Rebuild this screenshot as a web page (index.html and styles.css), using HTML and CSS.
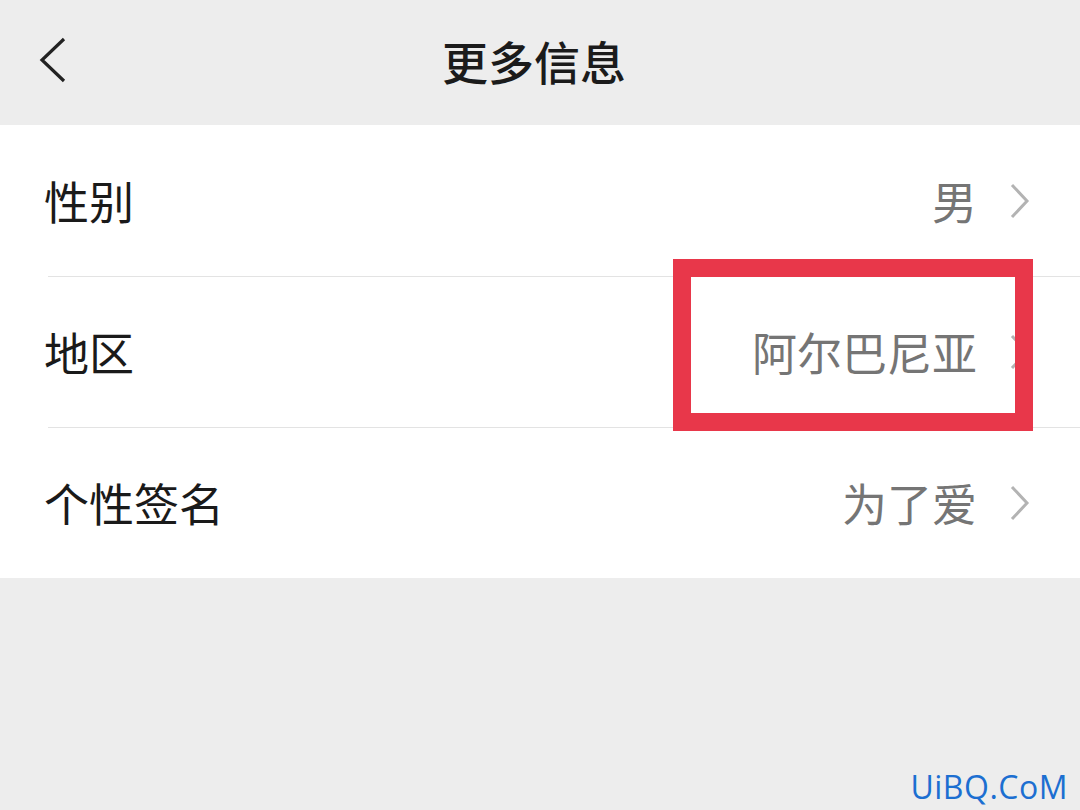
FILE: index.html
```html
<!DOCTYPE html>
<html lang="zh-CN">
<head>
  <meta charset="UTF-8" />
  <title>更多信息</title>
  <link rel="stylesheet" href="styles.css">
</head>
<body>

  <div class="header">
    <svg class="back" width="28" height="46" viewBox="0 0 28 46">
      <polyline points="25,2 3,23 25,44" fill="none" stroke="#222" stroke-width="3.2" />
    </svg>
    <div class="title">更多信息</div>
  </div>

  <div class="list">
    <div class="row">
      <div class="label">性别</div>
      <div class="value">男</div>
      <svg class="arrow" width="20" height="36" viewBox="0 0 20 36">
        <polyline points="2,2 17,18 2,34" fill="none" stroke="#b3b3b3" stroke-width="3" />
      </svg>
    </div>
    <div class="row">
      <div class="label">地区</div>
      <div class="value">阿尔巴尼亚</div>
      <svg class="arrow" width="20" height="36" viewBox="0 0 20 36">
        <polyline points="2,2 17,18 2,34" fill="none" stroke="#b3b3b3" stroke-width="3" />
      </svg>
      <div class="mark"></div>
    </div>
    <div class="row">
      <div class="label">个性签名</div>
      <div class="value">为了爱</div>
      <svg class="arrow" width="20" height="36" viewBox="0 0 20 36">
        <polyline points="2,2 17,18 2,34" fill="none" stroke="#b3b3b3" stroke-width="3" />
      </svg>
    </div>
  </div>

  <div class="watermark">UiBQ.CoM</div>

</body>
</html>
```

FILE: styles.css
```css
body {
  margin: 0;
  width: 1080px;
  height: 810px;
  overflow: hidden;
  background-color: #ededed;
  font-family: "Noto Sans CJK SC", "Noto Sans", sans-serif;
  position: relative;
}

.header {
  height: 125px;
  display: flex;
  align-items: center;
  justify-content: center;
  position: relative;
}

.back {
  position: absolute;
  left: 39px;
  top: 37px;
}

.title {
  font-size: 46px;
  font-weight: 500;
  color: #1b1b1b;
  margin-top: -6px;
  margin-left: -12px;
}

.list {
  background-color: #fff;
}

.row {
  height: 151px;
  display: flex;
  align-items: center;
  padding: 0 50px 0 44px;
  position: relative;
}

.row + .row::before {
  content: "";
  position: absolute;
  top: 0;
  left: 48px;
  right: 0;
  border-top: 1px solid #e3e3e3;
}

.label {
  flex: 1;
  font-size: 45px;
  color: #1a1a1a;
}

.value {
  font-size: 45px;
  color: #757575;
  margin-right: 33px;
}

.arrow {
  display: block;
}

.mark {
  position: absolute;
  z-index: 2;
  left: 673px;
  top: -17px;
  width: 324px;
  height: 136px;
  border: 18px solid #e8374a;
}

.watermark {
  position: absolute;
  right: 12px;
  bottom: 2px;
  font-family: "Open Sans", sans-serif;
  font-size: 32px;
  color: #1c6fd1;
  letter-spacing: 0.5px;
}
```
